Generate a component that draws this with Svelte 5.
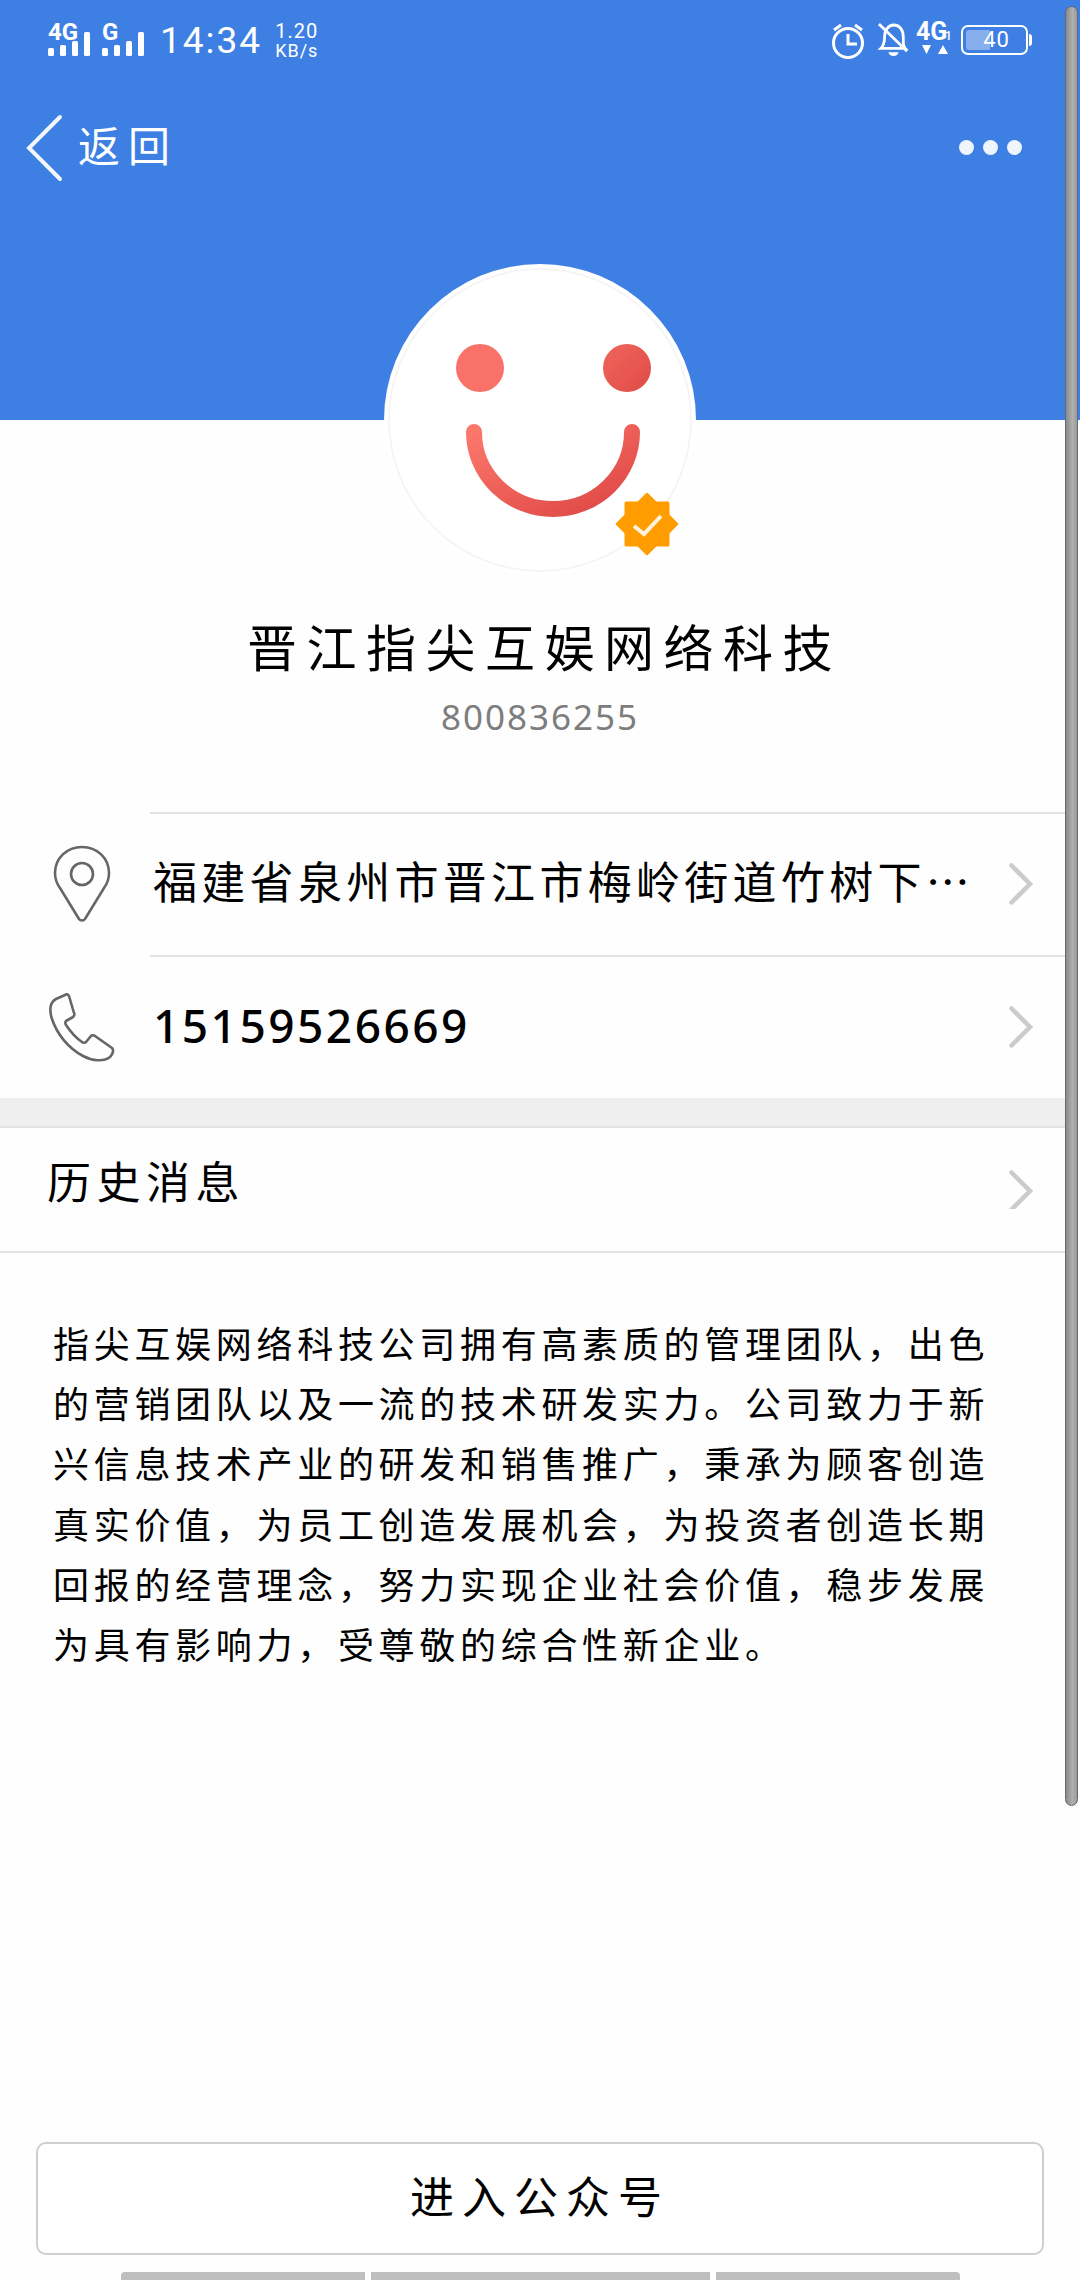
<script>
	const description =
		'指尖互娱网络科技公司拥有高素质的管理团队，出色的营销团队以及一流的技术研发实力。公司致力于新兴信息技术产业的研发和销售推广，秉承为顾客创造真实价值，为员工创造发展机会，为投资者创造长期回报的经营理念，努力实现企业社会价值，稳步发展为具有影响力，受尊敬的综合性新企业。';
	const bars = [
		[0, 49, 8],
		[12, 46, 11],
		[24, 42, 15],
		[36, 33, 24]
	];
</script>

<div class="page">
	<header class="top">
		<div class="status">
			<svg class="signal" width="44" height="36" viewBox="0 0 44 36">
				<text x="0" y="17" class="net">4G</text>
				{#each bars as [x, y, h]}
					<rect {x} y={y - 24} width="6" height={h} rx="1.5" fill="#fff" />
				{/each}
			</svg>
			<svg class="signal second" width="44" height="36" viewBox="0 0 44 36">
				<text x="0" y="17" class="net">G</text>
				{#each bars as [x, y, h]}
					<rect {x} y={y - 24} width="6" height={h} rx="1.5" fill="#fff" />
				{/each}
			</svg>
			<span class="time">14:34</span>
			<span class="speed"><b>1.20</b><i>KB/s</i></span>
			<span class="grow"></span>
			<svg width="36" height="36" viewBox="0 0 36 36" fill="none" stroke="#fff" stroke-width="3">
				<circle cx="18" cy="21" r="14.5" />
				<path d="M18 12v10h9M4 8l7-5M32 8l-7-5" />
			</svg>
			<svg class="bell" width="30" height="38" viewBox="0 0 32 38" fill="none" stroke="#fff" stroke-width="3">
				<path d="M3 28c3-3 4-6 4-12 0-8 4-13 10-13s10 5 10 13v6c0 3 1 5 2 6H3z" />
				<path d="M1 2l30 29" />
				<path d="M11 32h11c-1 3-3 4-5.500 4s-4.500-1-5.500-4z" fill="#fff" stroke="none" />
			</svg>
			<svg class="data" width="36" height="36" viewBox="0 0 36 36">
				<text x="0" y="18" class="net big">4G</text>
				<text x="29" y="18" class="net small">1</text>
				<path d="M6 23h9l-4.500 9zM22 32h10l-5-9z" fill="#fff" />
			</svg>
			<div class="battery">
				<span class="level"></span>
				<span class="pct">40</span>
			</div>
		</div>
		<nav class="bar">
			<svg width="40" height="68" viewBox="0 0 40 68" fill="none" stroke="#f2f6fd" stroke-width="4" stroke-linecap="round">
				<path d="M35 3L4 34l31 31" />
			</svg>
			<span class="back">返回</span>
			<span class="grow"></span>
			<span class="dots"><i></i><i></i><i></i></span>
		</nav>
	</header>

	<section class="profile">
		<div class="avatar">
			<svg width="312" height="312" viewBox="0 0 312 312">
				<defs>
					<linearGradient id="face" x1="0" y1="0" x2="1" y2="1">
						<stop offset="0" stop-color="#fb776b" />
						<stop offset="1" stop-color="#de4643" />
					</linearGradient>
					<linearGradient id="eye2" x1="0" y1="0" x2="1" y2="1">
						<stop offset="0" stop-color="#f0655c" />
						<stop offset="1" stop-color="#e04b47" />
					</linearGradient>
				</defs>
				<circle cx="156" cy="156" r="156" fill="#fff" />
				<circle cx="156" cy="156" r="151" fill="#fff" stroke="#f5f5f5" stroke-width="2" />
				<circle cx="96" cy="104" r="24" fill="#f9726a" />
				<circle cx="243" cy="104" r="24" fill="url(#eye2)" />
				<path d="M90 168A79 77 0 0 0 248 168" fill="none" stroke="url(#face)" stroke-width="16" stroke-linecap="round" />
			</svg>
			<svg class="badge" width="64" height="64" viewBox="-32 -32 64 64">
				<g fill="#ff9d00" stroke="#ff9d00" stroke-width="3" stroke-linejoin="round">
					<rect x="-21" y="-21" width="42" height="42" />
					<rect x="-21" y="-21" width="42" height="42" transform="rotate(45)" />
				</g>
				<path d="M-13 2l10 8 17-18" fill="none" stroke="#fff3dc" stroke-width="4" />
			</svg>
		</div>
		<h1>晋江指尖互娱网络科技</h1>
		<p class="account">800836255</p>
	</section>

	<section class="contact">
		<div class="row">
			<div class="icon">
				<svg width="58" height="78" viewBox="0 0 58 78" fill="none" stroke="#666" stroke-width="2.600">
					<path d="M29 2C14 2 2 13 2 28c0 6 2 11 5 15l19 31c1.500 2 4.500 2 6 0l19-31c3-4 5-9 5-15C56 13 44 2 29 2z" />
					<circle cx="29" cy="29" r="11" />
				</svg>
			</div>
			<div class="cell">
				<span class="address">福建省泉州市晋江市梅岭街道竹树下…</span>
				<svg class="chev" width="30" height="46" viewBox="0 0 30 46" fill="none" stroke="#cbcbcb" stroke-width="4.500" stroke-linecap="round">
					<path d="M7.500 4.500L26 23 7.500 41.500" />
				</svg>
			</div>
		</div>
		<div class="row">
			<div class="icon">
				<svg width="68" height="70" viewBox="0 0 68 70" fill="none" stroke="#666" stroke-width="2.600" stroke-linejoin="round">
					<path d="M17 3L8 7C2 10 1 18 4 27c5 15 16 29 31 37 9 5 21 6 27 1 3-3 4-7 2-9L47 44c-1-1-3-1-4 0l-5 6c-1 1-3 1-4 0-6-4-12-11-16-17-1-2-1-3 0-4l7-4c1-1 2-3 1-4L21 4c-1-2-3-2-4-1z" />
				</svg>
			</div>
			<div class="cell">
				<span class="phone">15159526669</span>
				<svg class="chev" width="30" height="46" viewBox="0 0 30 46" fill="none" stroke="#cbcbcb" stroke-width="4.500" stroke-linecap="round">
					<path d="M7.500 4.500L26 23 7.500 41.500" />
				</svg>
			</div>
		</div>
	</section>

	<div class="band"></div>

	<div class="history">
		<span>历史消息</span>
		<svg class="chev" width="30" height="41" viewBox="0 0 30 41" fill="none" stroke="#cbcbcb" stroke-width="4.500" stroke-linecap="round">
			<path d="M7.500 4.500L26 23 7.500 41.500" />
		</svg>
	</div>

	<p class="desc">{description}</p>

	<span class="grow"></span>

	<button class="enter"><span>进入公众号</span></button>

	<div class="gesture"><i></i><i></i><i></i></div>

	<div class="scrollbar"></div>
</div>

<style>
	:global(body) {
		margin: 0;
		background: #fff;
	}

	.page {
		position: relative;
		display: flex;
		flex-direction: column;
		width: 1080px;
		height: 2280px;
		overflow: hidden;
		background: #fefefe;
		color: #000;
		font-family: 'Noto Sans CJK SC', 'Noto Sans', sans-serif;
	}

	.grow {
		flex: 1;
	}

	.top {
		height: 420px;
		flex: none;
		background: #3e7fe3;
		color: #fff;
	}

	.status {
		display: flex;
		align-items: center;
		height: 80px;
		padding: 0 52px 0 48px;
		box-sizing: border-box;
	}

	.status svg {
		flex: none;
		overflow: visible;
	}

	.signal {
		margin-top: 2px;
	}

	.second {
		margin-left: 10px;
	}

	.net {
		fill: #fff;
		font-family: Roboto, sans-serif;
		font-size: 24px;
		font-weight: 700;
	}

	.net.big {
		font-size: 25px;
	}

	.net.small {
		font-size: 12px;
		font-weight: 500;
	}

	.time {
		margin-left: 14px;
		font-family: Roboto, sans-serif;
		font-size: 37px;
		letter-spacing: 2px;
		line-height: 1;
	}

	.speed {
		display: flex;
		flex-direction: column;
		margin: 2px 0 0 13px;
		font-family: Roboto, sans-serif;
		line-height: 20px;
		text-align: center;
	}

	.speed b {
		font-weight: 400;
		font-size: 20px;
		letter-spacing: 1px;
	}

	.speed i {
		font-style: normal;
		font-size: 18px;
		letter-spacing: 1px;
	}

	.bell {
		margin-left: 12px;
	}

	.data {
		margin-left: 8px;
	}

	.battery {
		position: relative;
		width: 63px;
		height: 26px;
		margin-left: 9px;
		border: 2px solid #fff;
		border-radius: 7px;
		text-align: center;
	}

	.battery::after {
		content: '';
		position: absolute;
		right: -6px;
		top: 7px;
		width: 3px;
		height: 12px;
		background: #fff;
		border-radius: 0 3px 3px 0;
	}

	.level {
		position: absolute;
		left: 3px;
		top: 3px;
		bottom: 3px;
		width: 24px;
		background: rgba(255, 255, 255, 0.38);
		border-radius: 3px 0 0 3px;
	}

	.pct {
		position: relative;
		display: block;
		font-family: Roboto, sans-serif;
		font-size: 22px;
		line-height: 26px;
		letter-spacing: 1px;
		margin-left: 4px;
	}

	.bar {
		display: flex;
		align-items: center;
		height: 136px;
		padding: 0 58px 0 25px;
	}

	.back {
		margin: -8px 0 0 13px;
		font-size: 42px;
		letter-spacing: 8px;
		line-height: 1;
	}

	.dots {
		display: flex;
		gap: 9px;
		margin-top: -1px;
	}

	.dots i {
		width: 15px;
		height: 15px;
		border-radius: 50%;
		background: #eff4fd;
	}

	.profile {
		display: flex;
		flex-direction: column;
		align-items: center;
		flex: none;
		height: 392px;
	}

	.avatar {
		position: relative;
		width: 312px;
		height: 312px;
		margin-top: -156px;
	}

	.avatar > svg:first-child {
		display: block;
	}

	.badge {
		position: absolute;
		left: 231px;
		top: 228px;
	}

	h1 {
		margin: 37px 0 0;
		padding-left: 9px;
		font-size: 50px;
		font-weight: 400;
		letter-spacing: 9.500px;
		line-height: 64px;
	}

	.account {
		margin: 17px 0 0;
		font-family: 'Noto Sans', sans-serif;
		font-size: 35px;
		letter-spacing: 2px;
		line-height: 46px;
		color: #7d7d7d;
	}

	.contact {
		flex: none;
	}

	.row {
		display: flex;
		height: 143px;
	}

	.icon {
		display: flex;
		align-items: center;
		justify-content: center;
		width: 150px;
		padding-left: 14px;
		box-sizing: border-box;
		flex: none;
	}

	.cell {
		display: flex;
		align-items: center;
		flex: 1;
		border-top: 2px solid #e2e2e2;
		padding-left: 3px;
		padding-right: 31px;
		margin-right: 15px;
	}

	.chev {
		flex: none;
		margin-top: -2px;
	}

	.address {
		flex: 1;
		margin-top: -9px;
		font-size: 44px;
		letter-spacing: 4.300px;
		white-space: nowrap;
	}

	.phone {
		flex: 1;
		margin-top: -5px;
		font-family: 'Noto Sans', sans-serif;
		font-size: 46px;
		font-weight: 500;
		letter-spacing: 2.500px;
	}

	.band {
		flex: none;
		height: 28px;
		background: #efefef;
		margin-right: 15px;
	}

	.history {
		display: flex;
		align-items: center;
		justify-content: space-between;
		flex: none;
		height: 127px;
		margin-right: 15px;
		padding: 0 31px 0 47px;
		box-sizing: border-box;
		border-top: 2px solid #e2e2e2;
		border-bottom: 2px solid #e2e2e2;
		font-size: 44px;
		letter-spacing: 5.500px;
	}

	.history span {
		margin-top: -20px;
	}

	.desc {
		flex: none;
		width: 945px;
		margin: 59px 0 0 53px;
		font-size: 36px;
		letter-spacing: 4.700px;
		line-height: 60.200px;
	}

	.enter {
		flex: none;
		display: block;
		width: 1008px;
		height: 113px;
		margin: 0 36px;
		padding: 0 0 8px;
		background: #fff;
		border: 2px solid #cfcfcf;
		border-radius: 10px;
		color: #000;
		font-family: inherit;
		font-size: 44px;
		letter-spacing: 8px;
	}

	.gesture {
		display: flex;
		gap: 6px;
		flex: none;
		height: 8px;
		margin: 17px 0 0 121px;
	}

	.gesture i {
		height: 8px;
		background: #bfbfbf;
	}

	.gesture i:nth-child(1) {
		width: 244px;
		border-top-left-radius: 4px;
	}

	.gesture i:nth-child(2) {
		width: 339px;
	}

	.gesture i:nth-child(3) {
		width: 244px;
		border-top-right-radius: 4px;
	}

	.scrollbar {
		position: absolute;
		left: 1065px;
		top: 6px;
		width: 13px;
		height: 1800px;
		box-sizing: border-box;
		border: 1px solid #5f6a7a;
		border-radius: 7px;
		background: linear-gradient(to right, #8b8b8b, #b0b0b0 60%, #9a9a9a);
	}
</style>
